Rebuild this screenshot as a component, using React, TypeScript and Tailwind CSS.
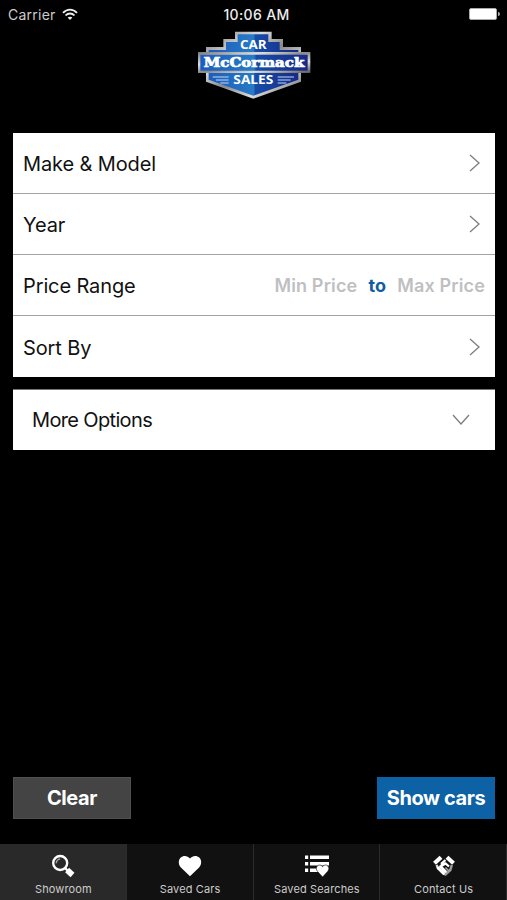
import type { ReactNode } from 'react';

const chevronRight = (
  <svg width="12" height="18" viewBox="0 0 12 18" fill="none" stroke="#7d7d7d" strokeWidth="1.3">
    <path d="M1 1l9 8-9 8" />
  </svg>
);

const tabs: { label: string; icon: ReactNode; active?: boolean }[] = [
  {
    label: 'Showroom',
    active: true,
    icon: (
      <svg width="24" height="24" viewBox="0 0 24 24" fill="none">
        <circle cx="9.2" cy="9" r="7" stroke="#fff" strokeWidth="2.4" />
        <path d="M5.3 9.3a4 4 0 0 1 3.8-4.3" stroke="#aaa" strokeWidth="1.4" />
        <path d="M14 14l2.5 2.5" stroke="#fff" strokeWidth="2.4" />
        <path d="M16.1 16l5.4 5" stroke="#fff" strokeWidth="5.8" />
      </svg>
    ),
  },
  {
    label: 'Saved Cars',
    icon: (
      <svg width="24" height="24" viewBox="0 0 24 24" fill="#fff">
        <path d="M12 22.3L2.9 13.4C.1 10.6.3 6.1 2.5 3.8 5.2 1.1 9.4 1.2 12 4.600c2.600-3.400 6.800-3.500 9.500-.8 2.200 2.300 2.400 6.800-.4 9.600z" />
      </svg>
    ),
  },
  {
    label: 'Saved Searches',
    icon: (
      <svg width="26" height="24" viewBox="0 0 26 24" fill="#fff">
        <path d="M1 1.500h3.200v3.400H1zM6 1.500h19v3.400H6zM1 8h3.200v3.400H1zM6 8h19v3.400H6zM1 14.500h3.200v3.400H1zM6 14.500h9v3.400H6z" />
        <path
          d="M18.600 23l-5-5.500c-1.700-1.900-1.600-4.200-.3-5.500 1.500-1.500 3.900-1.300 5.300.7 1.400-2 3.800-2.200 5.300-.7 1.300 1.300 1.400 3.600-.3 5.500z"
          stroke="#111"
          strokeWidth=".6"
        />
      </svg>
    ),
  },
  {
    label: 'Contact Us',
    icon: (
      <svg width="24" height="24" viewBox="0 0 24 24" fill="none">
        <path d="M2.500 9.300L9 3.300M15 3.300L21.500 9.300" stroke="#fff" strokeWidth="4.200" />
        <path d="M4.500 11l2 4" stroke="#ddd" strokeWidth="2.400" />
        <path d="M19.800 11l-1.500 5-4.800 4.500-2-1" stroke="#999" strokeWidth="2.600" />
        <path d="M13.500 6L9.800 9.300v2.500l3.700-2.300 3.500 3" stroke="#fff" strokeWidth="2.300" />
        <path d="M6 14l5.500 5.500M8.500 12.500l5 5" stroke="#fff" strokeWidth="2.800" strokeLinecap="round" />
        <path d="M13.500 13.500l3.500 3.500" stroke="#aaa" strokeWidth="1.500" />
      </svg>
    ),
  },
];

function Logo() {
  return (
    <svg width="114" height="70" viewBox="21 90 342 210" textAnchor="middle">
      <defs>
        <linearGradient id="chrome" x1="0" y1="0" x2="1" y2="1">
          <stop offset="0" stopColor="#777" />
          <stop offset=".3" stopColor="#ddd" />
          <stop offset=".5" stopColor="#888" />
          <stop offset=".72" stopColor="#ddd" />
          <stop offset="1" stopColor="#555" />
        </linearGradient>
        <linearGradient id="blue" x1="0" y1="0" x2="1" y2="0">
          <stop offset="0" stopColor="#1f5cbc" />
          <stop offset=".5" stopColor="#277bc5" />
          <stop offset=".52" stopColor="#164da8" />
          <stop offset="1" stopColor="#172a86" />
        </linearGradient>
      </defs>
      <path d="M135 95h110v22h34v24h54v104l-143 51L48 245V141h52v-24h35z" fill="url(#chrome)" />
      <path d="M143 103h92v23h34v24h56v89l-135 48-134-48v-89h52v-24h35z" fill="url(#blue)" />
      <path d="M24 156h337v63H24z" fill="url(#chrome)" />
      <path d="M31 164h322v48H31z" fill="url(#blue)" />
      <path d="M68 231h48M78 240h38M91 249h25M263 231h49M263 240h39M263 249h26" stroke="#c2daf2" strokeWidth="3" />
      <g fill="#fff" fontWeight="700">
        <text x="190" y="147" fontSize="38" textLength="80" lengthAdjust="spacingAndGlyphs" className="font-['Open_Sans',sans-serif]">CAR</text>
        <text x="192" y="202" fontSize="40" textLength="302" lengthAdjust="spacingAndGlyphs" stroke="#fff" strokeWidth="2.200" className="font-['DejaVu_Serif',serif]">McCormack</text>
        <text x="190" y="253" fontSize="38" textLength="120" lengthAdjust="spacingAndGlyphs" className="font-['Open_Sans',sans-serif]">SALES</text>
      </g>
    </svg>
  );
}

function Row({ label, children }: { label: string; children: ReactNode }) {
  return (
    <div className="flex h-[61px] items-center justify-between border-b border-[#a2a2a2] pl-2.5 last:border-b-0">
      <span className="pt-0.5 text-[20px] tracking-[-0.12px]">{label}</span>
      {children}
    </div>
  );
}

export default function App() {
  return (
    <div className="flex h-[900px] w-[507px] flex-col bg-black font-['Inter',sans-serif] text-[#111]">
      <header className="grid h-7 grid-cols-3 items-center pr-[7px] pl-2 text-[14px] text-[#eee]">
        <div className="flex items-center gap-1.5">
          <span className="text-[#ccc] tracking-[0.25px]">Carrier</span>
          <svg width="16" height="13" viewBox="0 0 16 13" fill="none" stroke="#eee" strokeWidth="1.8">
            <path d="M1 4.800c4-4.300 10-4.300 14 0M3.500 7.500c2.600-2.700 6.400-2.700 9 0" />
            <path d="M8 12L5.600 9.600c1.400-1.300 3.400-1.300 4.800 0z" fill="#eee" stroke="none" />
          </svg>
        </div>
        <span className="pl-[5px] text-center font-medium tracking-[0.35px]">10:06 AM</span>
        <div className="flex items-center justify-end gap-px">
          <div className="h-3 w-7 rounded-[2px] border border-[#aaa] bg-white" />
          <div className="h-1 w-0.5 rounded-r bg-[#aaa]" />
        </div>
      </header>

      <div className="flex h-[105px] pt-0.5 pl-[197px]">
        <Logo />
      </div>

      <main className="flex flex-1 flex-col px-[13px] pr-3">
        <section className="bg-white">
          <Row label="Make & Model"><span className="pr-3.5">{chevronRight}</span></Row>
          <Row label="Year"><span className="pr-3.5">{chevronRight}</span></Row>
          <Row label="Price Range">
            <div className="flex items-center pt-px pr-2.5 text-[18px] font-semibold tracking-[0.15px] text-[#bfbfc3]">
              <span>Min Price</span>
              <span className="mx-[11px] font-bold text-[#105d9f]">to</span>
              <span>Max Price</span>
            </div>
          </Row>
          <Row label="Sort By"><span className="pr-3.5">{chevronRight}</span></Row>
        </section>

        <section className="mt-3 flex h-[61px] items-center justify-between border-t border-[#777] bg-white pr-[25px] pl-[19px]">
          <span className="text-[20px] tracking-[-0.65px]">More Options</span>
          <svg width="18" height="12" viewBox="0 0 18 12" fill="none" stroke="#7d7d7d" strokeWidth="1.3">
            <path d="M1 1l8 9 8-9" />
          </svg>
        </section>

        <div className="mt-auto mb-[25px] flex justify-between text-[20px] font-bold tracking-[-0.4px] text-white">
          <button className="h-[42px] w-[118px] border border-[#505050] bg-[#444]">Clear</button>
          <button className="h-[42px] w-[118px] bg-[#0d61a5] whitespace-nowrap">Show cars</button>
        </div>
      </main>

      <nav className="grid h-14 grid-cols-4 bg-[#111]">
        {tabs.map((tab) => (
          <button
            key={tab.label}
            className={`flex flex-col items-center border-r border-[#2b2b2b] pt-2.5 pl-px ${tab.active ? 'bg-[#292929]' : ''}`}
          >
            {tab.icon}
            <span className="mt-[3px] text-[11px] leading-4 tracking-[0.12px] whitespace-nowrap text-[#ccc]">{tab.label}</span>
          </button>
        ))}
      </nav>
    </div>
  );
}
